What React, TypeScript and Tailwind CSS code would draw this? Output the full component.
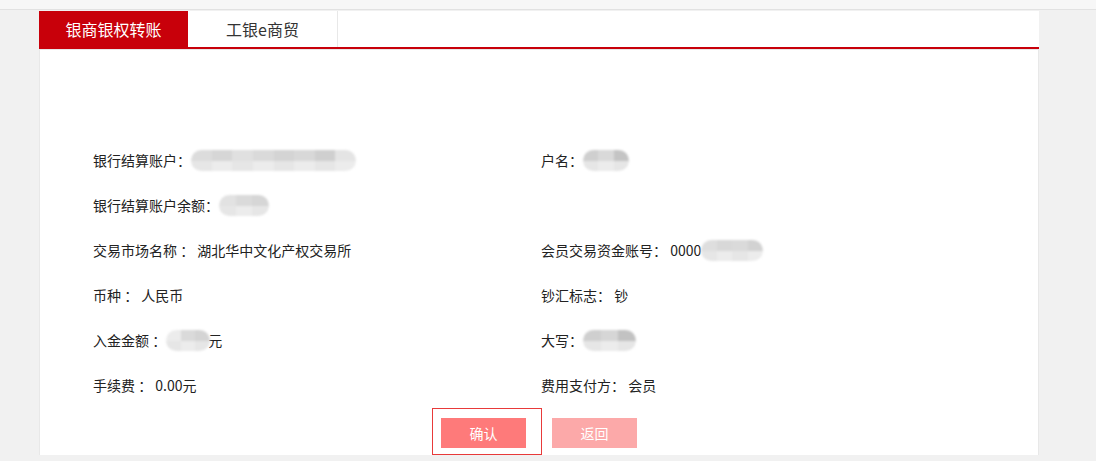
import React from "react";

function Blob({ w, cells }: { w: number; cells: string[] }) {
  return (
    <span
      className="inline-flex h-[21px] overflow-hidden rounded-full align-middle blur-[1.2px]"
      style={{ width: w }}
    >
      {cells.map((c, i) => (
        <span key={i} className="flex-1 flex flex-col">
          <span className="flex-1" style={{ background: c }} />
          <span className="flex-1" style={{ background: i % 2 ? "#ececec" : "#e6e6e6" }} />
        </span>
      ))}
    </span>
  );
}

function Row({ children }: { children: React.ReactNode }) {
  return <div className="h-[45px] flex items-center whitespace-pre">{children}</div>;
}

export default function App() {
  return (
    <div
      className="w-[1096px] h-[461px] bg-[#f1f1f1] overflow-hidden text-[#222]"
      style={{ fontFamily: '"Noto Sans CJK SC", "Noto Sans", sans-serif' }}
    >
      <div className="h-[10px] bg-[#f7f7f7] border-b border-[#e2e2e2]" />
      <div className="ml-[39px] mt-[1px] w-[1000px] bg-white h-[444px] flex flex-col">
        <div className="flex h-[40px] border-b-2 border-[#c8000a]">
          <div className="w-[149px] bg-[#c8000a] text-white text-[16px] flex items-center justify-center">
            银商银权转账
          </div>
          <div className="w-[150px] border-r border-[#e8e8e8] text-[#333] text-[16px] flex items-center justify-center">
            工银e商贸
          </div>
        </div>
        <div className="flex-1 border-l border-r border-t border-[#e8e8e8] pt-[88px] pl-[53px] text-[14px]">
          <div className="grid grid-cols-[448px_1fr]">
            <Row>
              银行结算账户：
              <Blob w={165} cells={["#dcdcdc", "#d6d6d6", "#e0e0e0", "#dadada", "#d4d4d4", "#d8d8d8", "#cfcfcf", "#e4e4e4"]} />
            </Row>
            <Row>
              户名：
              <Blob w={46} cells={["#cfcfcf", "#d9d9d9", "#c4c4c4"]} />
            </Row>
            <Row>
              银行结算账户余额：
              <Blob w={50} cells={["#e2e2e2", "#dadada", "#d6d6d6"]} />
            </Row>
            <Row> </Row>
            <Row>交易市场名称 ： 湖北华中文化产权交易所</Row>
            <Row>
              会员交易资金账号： 0000
              <Blob w={62} cells={["#dedede", "#d8d8d8", "#dadada", "#d2d2d2"]} />
            </Row>
            <Row>币种 ： 人民币</Row>
            <Row>钞汇标志： 钞</Row>
            <Row>
              入金金额 ：
              <Blob w={44} cells={["#ececec", "#dadada", "#d4d4d4"]} />
              <span className="-ml-[2px]">元</span>
            </Row>
            <Row>
              大写：
              <Blob w={53} cells={["#cfcfcf", "#d6d6d6", "#c2c2c2"]} />
            </Row>
            <Row>手续费 ： 0.00元</Row>
            <Row>费用支付方： 会员</Row>
          </div>
          <div className="flex ml-[339px] gap-[10px]">
            <div className="border border-[#e83a3a] pl-[8px] pr-[15px] pt-[9px] pb-[6px]">
              <div className="w-[85px] h-[30px] bg-[#fe7a7a] text-white text-[14px] flex items-center justify-center">
                确认
              </div>
            </div>
            <div className="pt-[10px]">
              <div className="w-[85px] h-[30px] bg-[#fca9a9] text-white text-[14px] flex items-center justify-center">
                返回
              </div>
            </div>
          </div>
        </div>
      </div>
    </div>
  );
}
